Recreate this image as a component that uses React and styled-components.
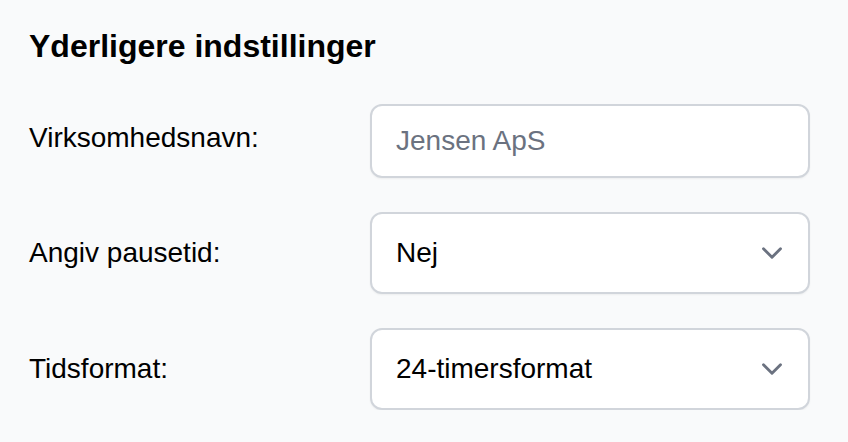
import React from "react"
import styled, { createGlobalStyle } from "styled-components"
import { ChevronDown } from "lucide-react"

const GlobalStyle = createGlobalStyle`
    html, body {
        margin: 0;
        padding: 0;
        background: #f9fafb;
    }
    body {
        font-family: "Liberation Sans", Arial, Helvetica, sans-serif;
        color: #000;
    }
`
const Container = styled.section`
    padding: 26px 39px 0 29px;
`
const Title = styled.h2`
    margin: 0 0 38px;
    font-size: 32px;
    line-height: 40px;
    font-weight: 700;
`
const Form = styled.div`
    display: grid;
    grid-template-columns: 341px 440px;
    row-gap: 34px;
    align-items: center;
`
const Label = styled.label`
    font-size: 28px;
    line-height: 32px;
    margin-bottom: ${props => props.$raise || 0}px;
`
const fieldBox = `
    box-sizing: border-box;
    width: 100%;
    border: 2px solid #d1d5db;
    border-radius: 12px;
    background: #fff;
    box-shadow: 0 1px 2px rgba(0, 0, 0, 0.05);
    font-family: "Liberation Sans", Arial, Helvetica, sans-serif;
    font-size: 28px;
`
const TextInput = styled.input`
    ${fieldBox}
    height: 74px;
    padding: 0 24px;
    color: #111;
    outline: none;

    &::placeholder {
        color: #6b7280;
    }
`
const Select = styled.div`
    ${fieldBox}
    height: 82px;
    padding: 0 19px 0 24px;
    display: flex;
    align-items: center;
    justify-content: space-between;
    cursor: pointer;
`
const Value = styled.span`
    line-height: 32px;
`
const Arrow = styled(ChevronDown)`
    color: #6b7280;
    flex-shrink: 0;
`

const Dropdown = ({ value }) => (
    <Select role="combobox">
        <Value>{ value }</Value>
        <Arrow size={ 34 } strokeWidth={ 2 } />
    </Select>
)

export default class App extends React.PureComponent {
    render() {
        return (
            <Container>
                <GlobalStyle />
                <Title>Yderligere indstillinger</Title>
                <Form>
                    <Label htmlFor="company" $raise={ 6 }>Virksomhedsnavn:</Label>
                    <TextInput id="company" placeholder="Jensen ApS" />

                    <Label>Angiv pausetid:</Label>
                    <Dropdown value="Nej" />

                    <Label>Tidsformat:</Label>
                    <Dropdown value="24-timersformat" />
                </Form>
            </Container>
        )
    }
}
